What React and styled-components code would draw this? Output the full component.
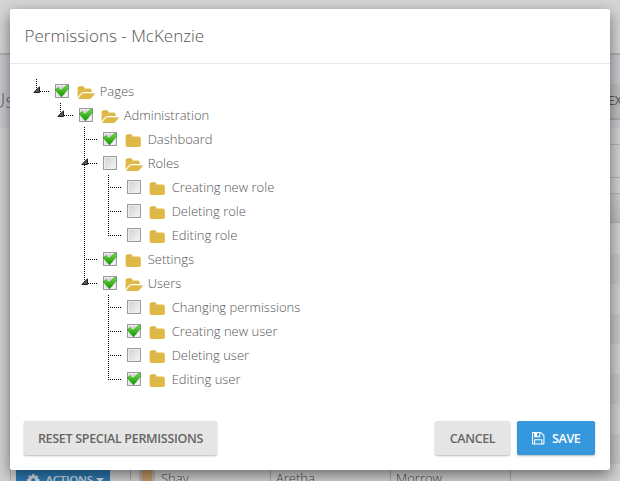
import React from "react";
import styled, { createGlobalStyle } from "styled-components";

const GlobalStyle = createGlobalStyle`
  * { box-sizing: border-box; }
  body { margin: 0; overflow: hidden; font-family: "Open Sans", sans-serif; }
`;

const Page = styled.div`
  position: relative;
  height: 481px;
  width: 620px;
  overflow: hidden;
  background: #d3d3d3;
  display: flex;
  flex-direction: column;
`;
const TopBar = styled.div`
  flex: 0 0 55px;
  background: #d6d6d6;
  border-bottom: 2px solid #afb1b7;
`;
const PageHeader = styled.div`
  flex: 0 0 73px;
  background: #c9cbd0;
  display: flex;
  justify-content: space-between;
  align-items: flex-start;
  color: #666;
  font-weight: 300;
  font-size: 20px;
`;
const PageTitle = styled.span`
  margin: 32px 0 0 -9px;
  line-height: 28px;
`;
const ExportButton = styled.span`
  width: 32px;
  height: 36px;
  margin-top: 29px;
  padding-left: 20px;
  background: #c0c0c0;
  border-bottom: 2px solid #adadad;
  font-size: 12px;
  font-weight: 400;
  line-height: 34px;
  color: #555;
  overflow: hidden;
`;
const Strip = styled.div`
  flex: 0 0 ${(p) => p.$h}px;
  margin-left: 10px;
  background: ${(p) => p.$bg || "#d3d3d3"};
  border-bottom: ${(p) => (p.$line ? "1px solid #b4b4b4" : "0")};
`;
const TableRow = styled.div`
  flex: 0 0 30px;
  display: grid;
  grid-template-columns: 120px 140px 120px 120px 1fr;
  margin-left: 10px;
  border-left: 1px solid #b5b5b5;
  font-size: 13px;
  font-weight: 300;
  color: #444;
`;
const TableCell = styled.div`
  display: flex;
  gap: 8px;
  padding: 4px 5px;
  line-height: 20px;
  border-right: ${(p) => (p.$last ? "0" : "1px solid #aaa")};
`;
const ActionButton = styled.div`
  display: flex;
  align-items: center;
  gap: 5px;
  width: 94px;
  height: 24px;
  padding-left: 10px;
  background: #2d7cb5;
  color: #d4dde3;
  font-size: 11.5px;
  font-weight: 600;
  letter-spacing: -0.3px;
`;
const Caret = styled.span`
  width: 8px;
  margin-left: -2px;
  border: 4px solid transparent;
  border-top-color: currentColor;
  border-bottom: 0;
`;
const Avatar = styled.span`
  width: 10px;
  height: 14px;
  margin: 0 1px 0 6px;
  border-radius: 4px;
  background: #c69b6b;
  box-shadow: 0 0 0 3px #bdb5ab;
`;

const Modal = styled.section`
  position: absolute;
  left: 10px;
  top: 9px;
  width: 600px;
  height: 461px;
  display: flex;
  flex-direction: column;
  background: #fff;
  border-radius: 2px;
  box-shadow: 0 5px 15px rgba(0, 0, 0, 0.5);
`;
const ModalHeader = styled.header`
  height: 55px;
  padding-left: 14.5px;
  border-bottom: 1px solid #e8e8e8;
  color: #555;
  font-size: 17px;
  font-weight: 300;
  line-height: 54px;
`;
const Tree = styled.div`
  flex: 1;
  padding: 15px 14px;
`;
const TreeRow = styled.div`
  display: flex;
  height: 24px;
`;
const dotsDown = "repeating-linear-gradient(to bottom, #000 0 1px, transparent 1px 2px)";
const dotsAcross = "repeating-linear-gradient(to right, #000 0 1px, transparent 1px 2px)";
const Guide = styled.span`
  width: 24px;
  background: ${(p) => (p.$line ? dotsDown : "none")} 12px 0 / 1px 100% no-repeat;
`;
const Elbow = styled.span`
  width: 31px;
  background:
    ${dotsDown} 12px 0 / 1px ${(p) => (p.$last ? "13px" : "24px")} no-repeat,
    ${dotsAcross} 12px 12px / 13px 1px no-repeat;
`;
const Arrow = styled.svg`
  display: block;
  width: 7px;
  height: 7px;
  margin: 7px 0 0 8.5px;
`;
const Checkbox = styled.span`
  width: 14px;
  height: 14px;
  margin-top: 5px;
  border: 1px solid #9b9b9b;
  background: linear-gradient(135deg, #d0d0d0, #f5f5f5);
  box-shadow: inset 0 0 0 1px #eee;
`;
const CheckMark = styled.svg`
  display: block;
  width: 14px;
  height: 14px;
  margin: -1px;
`;
const FolderIcon = styled.svg`
  width: 18.3px;
  height: 16.4px;
  margin: 5.9px 0 0 8.4px;
  fill: #dfb948;
  overflow: visible;
`;
const Label = styled.span`
  margin-left: 4px;
  color: #555;
  font-size: 13px;
  font-weight: 300;
  line-height: 24px;
  white-space: nowrap;
`;
const ModalFooter = styled.footer`
  display: flex;
  height: 64px;
  padding: 15px 15px 0 14px;
  gap: 7px;
`;
const Button = styled.button`
  display: flex;
  align-items: center;
  justify-content: center;
  gap: 6px;
  width: ${(p) => p.$w}px;
  height: 34px;
  padding: 0;
  border: 0;
  border-radius: 2px;
  background: ${(p) => (p.$primary ? "#3598dc" : "#e5e5e5")};
  color: ${(p) => (p.$primary ? "#fff" : "#666")};
  box-shadow: 0 1px 2px rgba(0, 0, 0, 0.28);
  font: 600 12.5px "Open Sans", sans-serif;
  letter-spacing: ${(p) => p.$track || "-0.35px"};
  white-space: nowrap;
`;
const Spacer = styled.span`
  flex: 1;
`;
const SaveIcon = styled.svg`
  width: 14.5px;
  height: 14.5px;
  fill: currentColor;
`;

const CLOSED =
  "M1728 608v704q0 92-66 158t-158 66h-1216q-92 0-158-66t-66-158v-960q0-92 66-158t158-66h320q92 0 158 66t66 158v32h672q92 0 158 66t66 158z";
const OPEN =
  "M1943 952q0 31-31 66l-336 396q-43 51-120.5 86.5t-143.5 35.5h-1088q-34 0-60.5-13t-26.5-43q0-31 31-66l336-396q43-51 120.5-86.5t143.5-35.5h1088q34 0 60.5 13t26.5 43zm-343-344v160h-832q-94 0-197 47.5t-164 119.5l-337 396-5 6q0-4-.5-12.5t-.5-12.5v-960q0-92 66-158t158-66h320q92 0 158 66t66 158v32h544q92 0 158 66t66 158z";
const FLOPPY =
  "M512 1536h768v-384h-768v384zm896 0h128v-896q0-14-10-38.5t-20-34.5l-281-281q-10-10-34-20t-39-10v416q0 40-28 68t-68 28h-576q-40 0-68-28t-28-68v-416h-128v1280h128v-416q0-40 28-68t68-28h832q40 0 68 28t28 68v416zm-384-928v-320q0-13-9.5-22.5t-22.5-9.5h-192q-13 0-22.5 9.5t-9.5 22.5v320q0 13 9.5 22.5t22.5 9.5h192q13 0 22.5-9.5t9.5-22.5zm640 32v928q0 40-28 68t-68 28h-1344q-40 0-68-28t-28-68v-1344q0-40 28-68t68-28h928q40 0 88 20t76 48l280 280q28 28 48 76t20 88z";
const GEAR =
  "M1152 896q0-106-75-181t-181-75-181 75-75 181 75 181 181 75 181-75 75-181zm512-109v222q0 12-8 23t-20 13l-185 28q-19 54-39 91 35 50 107 138 10 12 10 25t-9 23q-27 37-99 108t-94 71q-12 0-26-9l-138-108q-44 23-91 38-16 136-29 186-7 28-36 28h-222q-14 0-24.500-8.500t-11.500-21.500l-28-184q-49-16-90-37l-141 107q-10 9-25 9-14 0-25-11-126-114-165-168-7-10-7-23 0-12 8-23 15-21 51-66.500t54-70.500q-27-50-41-99l-183-27q-13-2-21-12.500t-8-23.500v-222q0-12 8-23t19-13l186-28q14-46 39-92-40-57-107-138-10-12-10-24 0-10 9-23 26-36 98.500-107.500t94.500-71.500q13 0 26 10l138 107q44-23 91-38 16-136 29-186 7-28 36-28h222q14 0 24.500 8.500t11.500 21.500l28 184q49 16 90 37l142-107q9-9 24-9 13 0 25 10 129 119 165 170 7 8 7 22 0 12-8 23-15 21-51 66.500t-54 70.500q26 50 41 98l183 28q13 2 21 12.500t8 23.500z";

const NODES = [
  { label: "Pages", guides: [], last: true, open: true, checked: true },
  { label: "Administration", guides: [0], last: true, open: true, checked: true },
  { label: "Dashboard", guides: [0, 0], checked: true },
  { label: "Roles", guides: [0, 0], open: true },
  { label: "Creating new role", guides: [0, 0, 1] },
  { label: "Deleting role", guides: [0, 0, 1] },
  { label: "Editing role", guides: [0, 0, 1], last: true },
  { label: "Settings", guides: [0, 0], checked: true },
  { label: "Users", guides: [0, 0], last: true, open: true, checked: true },
  { label: "Changing permissions", guides: [0, 0, 0] },
  { label: "Creating new user", guides: [0, 0, 0], checked: true },
  { label: "Deleting user", guides: [0, 0, 0] },
  { label: "Editing user", guides: [0, 0, 0], last: true, checked: true },
];

function Node({ node }) {
  return (
    <TreeRow>
      {node.guides.map((line, i) => (
        <Guide key={i} $line={line} />
      ))}
      <Elbow $last={node.last}>
        {node.open && (
          <Arrow viewBox="0 0 7 7">
            <path d="M6.5 .8V6.5H.8Z" fill="#595959" stroke="#222" />
          </Arrow>
        )}
      </Elbow>
      <Checkbox>
        {node.checked && (
          <CheckMark viewBox="0 0 14 14">
            <path d="M.2 5.8 2.8 3.500 6 6.300 12.200 .9 14.200 3.500 6.500 13Z" fill="url(#leaf)" stroke="#239b12" strokeWidth=".6" />
          </CheckMark>
        )}
      </Checkbox>
      <FolderIcon viewBox="0 0 2000 1792">
        <path d={node.open ? OPEN : CLOSED} />
      </FolderIcon>
      <Label>{node.label}</Label>
    </TreeRow>
  );
}

const Defs = styled.svg`
  position: absolute;
  width: 0;
  height: 0;
`;

const STRIPES = ["#c9c9c9", "#d2d2d2", "#c9c9c9", "#d2d2d2", "#c9c9c9", "#d2d2d2", "#c9c9c9"];

export default function App() {
  return (
    <Page>
      <GlobalStyle />
      <Defs>
        <linearGradient id="leaf" x1="0" y1="0" x2="0" y2="1">
          <stop offset="0" stopColor="#7be055" />
          <stop offset=".5" stopColor="#3cbb1e" />
          <stop offset="1" stopColor="#1c8a0c" />
        </linearGradient>
      </Defs>
      <TopBar />
      <PageHeader>
        <PageTitle>Us</PageTitle>
        <ExportButton>EX</ExportButton>
      </PageHeader>
      <Strip $h={17} $line />
      <Strip $h={33} $line />
      <Strip $h={16} $line />
      <Strip $h={29} $line $bg="linear-gradient(#cecece, #bfbfbf)" />
      <Strip $h={31} />
      {STRIPES.map((c, i) => (
        <Strip key={i} $h={30} $bg={c} />
      ))}
      <TableRow>
        <TableCell>
          <ActionButton>
            <SaveIcon viewBox="0 0 1792 1792"><path d={GEAR} /></SaveIcon>
            ACTIONS <Caret />
          </ActionButton>
        </TableCell>
        <TableCell><Avatar />Shay</TableCell>
        <TableCell>Aretha</TableCell>
        <TableCell>Morrow</TableCell>
        <TableCell $last />
      </TableRow>
      <Modal>
        <ModalHeader>Permissions - McKenzie</ModalHeader>
        <Tree>
          {NODES.map((n) => (
            <Node key={n.label} node={n} />
          ))}
        </Tree>
        <ModalFooter>
          <Button $w={193} $track="-0.3px">RESET SPECIAL PERMISSIONS</Button>
          <Spacer />
          <Button $w={75}>CANCEL</Button>
          <Button $w={78} $primary>
            <SaveIcon viewBox="0 0 1792 1792"><path d={FLOPPY} /></SaveIcon>
            SAVE
          </Button>
        </ModalFooter>
      </Modal>
    </Page>
  );
}
